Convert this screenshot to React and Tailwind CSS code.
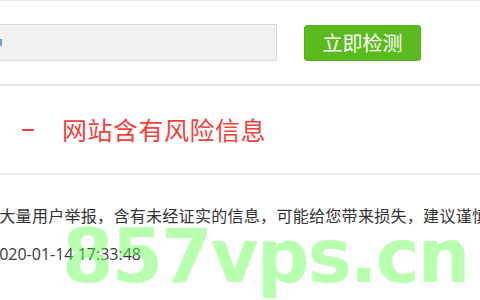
export default function App() {
  const cjk = { fontFamily: '"Noto Sans CJK SC", "Noto Sans", sans-serif' };
  return (
    <div className="relative w-[480px] h-[300px] overflow-hidden bg-white" style={cjk}>
      <div className="h-px bg-[#e6e6e6]" />
      <div className="flex items-center pt-[23px] pb-[23px]">
        <div className="ml-[-13px] w-[290px] h-[37px] bg-[#f2f2f2] border border-[#dcdcdc] flex items-center pl-[12px]">
          <div className="w-[2px] h-[7px] bg-[#5aa4f0]" />
        </div>
        <button className="ml-[27px] w-[117px] h-[36px] rounded-[3px] bg-[#5bbb1e] border border-[#55b01b] text-white text-[20px] leading-none flex items-center justify-center">
          立即检测
        </button>
      </div>
      <div className="h-[2px] bg-[#e8e8e8]" />
      <div className="h-[87px] flex items-center">
        <div className="ml-[22px] w-[12px] h-[2px] bg-[#f0413b]" />
        <div className="ml-[28px] text-[25px] leading-none text-[#f0413b] tracking-[0.5px]">网站含有风险信息</div>
      </div>
      <div className="h-[2px] bg-[#e8e8e8]" />
      <div className="pt-[30px] text-[16px] text-[#333] whitespace-nowrap">
        <div className="ml-[-17px] leading-[20px] tracking-[0.3px]">被大量用户举报，含有未经证实的信息，可能给您带来损失，建议谨慎访问</div>
        <div className="ml-[-10px] mt-[19px] leading-[20px] text-[#3a3a3a]" style={{ fontFamily: '"Open Sans", "Noto Sans", sans-serif' }}>2020-01-14 17:33:48</div>
      </div>
      <div
        className="absolute left-[62px] top-[219px] text-[74px] leading-none font-bold tracking-[-2px] whitespace-nowrap pointer-events-none text-[rgba(100,255,80,0.45)]"
        style={{ fontFamily: '"DejaVu Sans", sans-serif' }}
      >
        857vps.cn
      </div>
    </div>
  );
}
